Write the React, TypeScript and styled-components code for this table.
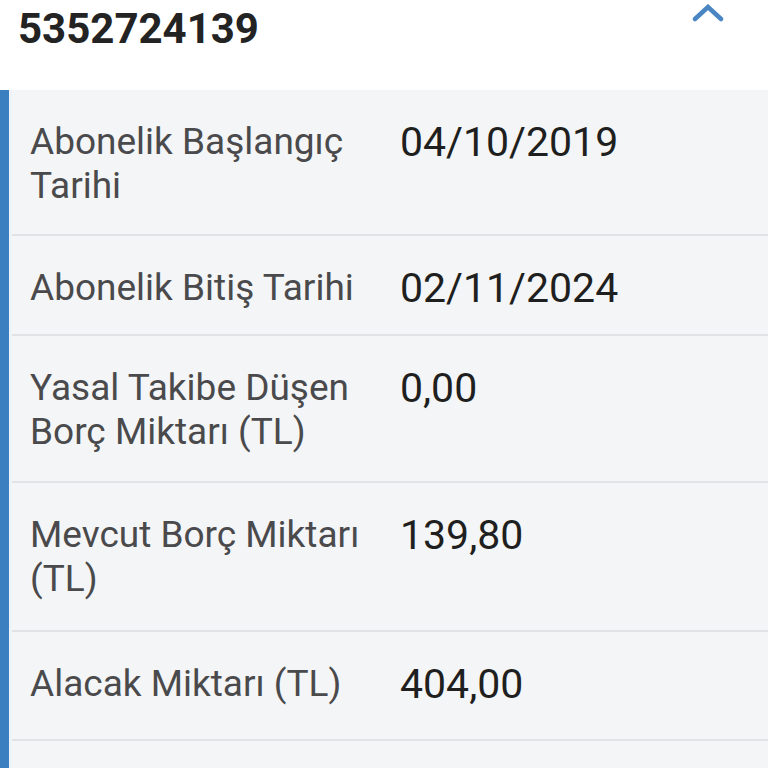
import React from "react";
import styled, { createGlobalStyle } from "styled-components";

const Global = createGlobalStyle`
  html, body { margin: 0; padding: 0; background: #ffffff; }
  body { font-family: Roboto, "Noto Sans", Arial, sans-serif; }
  * { box-sizing: border-box; }
`;

const Page = styled.div`
  width: 768px;
  height: 768px;
  overflow: hidden;
  display: flex;
  flex-direction: column;
  background: #ffffff;
`;

const Header = styled.div`
  height: 90px;
  flex: none;
  display: flex;
  justify-content: space-between;
  align-items: flex-start;
  padding: 4px 43px 0 18px;
  background: #ffffff;
`;

const Title = styled.div`
  font-family: Roboto, sans-serif;
  font-weight: 700;
  font-size: 42px;
  line-height: 50px;
  color: #232323;
  letter-spacing: 0;
`;

const Chevron = styled.svg`
  width: 34px;
  height: 22px;
  display: block;
`;

const Panel = styled.div`
  flex: 1;
  display: flex;
  background: #f4f5f7;
  border-left: 9px solid #3c7fc0;
`;

const Strip = styled.div`
  width: 3px;
  flex: none;
  background: #eef3f9;
`;

const List = styled.div`
  flex: 1;
  display: flex;
  flex-direction: column;
`;

const Row = styled.div<{ $h?: number }>`
  display: grid;
  grid-template-columns: 370px 1fr;
  align-items: start;
  min-height: ${(p) => (p.$h ? `${p.$h}px` : "auto")};
  padding: 30px 0 24px 18px;
  border-bottom: 2px solid #e1e2e5;
`;

const Label = styled.div`
  font-family: Roboto, sans-serif;
  font-size: 37px;
  line-height: 44px;
  color: #4a4a4c;
  padding-right: 8px;
`;

const Value = styled.div`
  font-family: Roboto, sans-serif;
  font-size: 41px;
  line-height: 44px;
  color: #1f1f20;
`;

const rows = [
  { label: "Abonelik Başlangıç Tarihi", value: "04/10/2019", h: 146 },
  { label: "Abonelik Bitiş Tarihi", value: "02/11/2024", h: 100 },
  { label: "Yasal Takibe Düşen Borç Miktarı (TL)", value: "0,00", h: 147 },
  { label: "Mevcut Borç Miktarı (TL)", value: "139,80", h: 149 },
  { label: "Alacak Miktarı (TL)", value: "404,00", h: 109 },
];

export default function App() {
  return (
    <Page>
      <Global />
      <Header>
        <Title>5352724139</Title>
        <Chevron viewBox="0 0 34 22">
          <polyline
            points="4,15 17,3 30,15"
            fill="none"
            stroke="#4a86c4"
            strokeWidth="4.5"
            strokeLinecap="round"
            strokeLinejoin="miter"
          />
        </Chevron>
      </Header>
      <Panel>
        <Strip />
        <List>
          {rows.map((r) => (
            <Row key={r.label} $h={r.h}>
              <Label>{r.label}</Label>
              <Value>{r.value}</Value>
            </Row>
          ))}
          <Row $h={120} />
        </List>
      </Panel>
    </Page>
  );
}
